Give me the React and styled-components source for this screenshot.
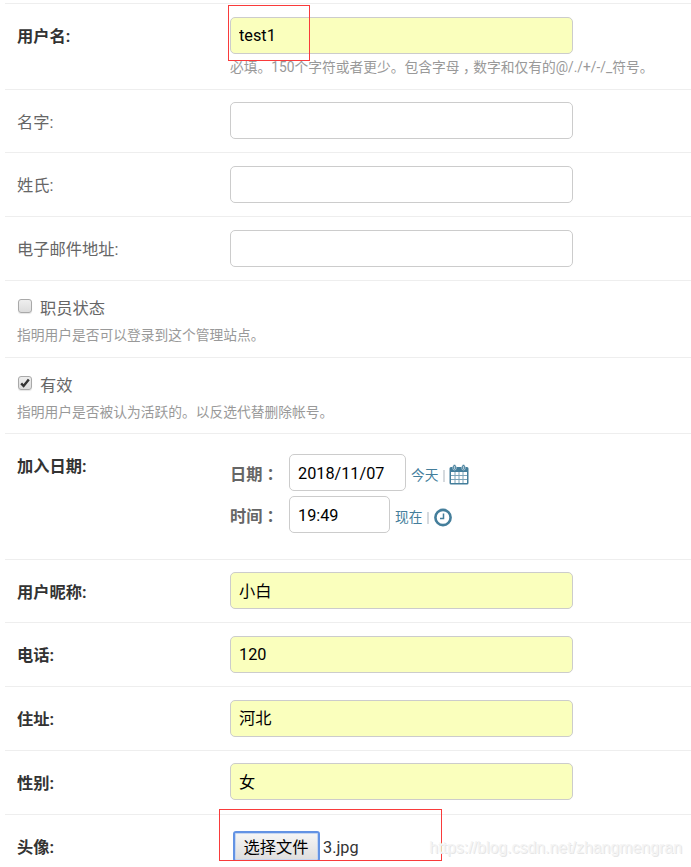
import React from 'react';
import styled, { createGlobalStyle } from 'styled-components';

const GlobalStyle = createGlobalStyle`
  * {
    box-sizing: border-box;
  }

  body {
    margin: 0;
    background: #fff;
    color: #333;
    font-family: Roboto, 'Noto Sans CJK SC', sans-serif;
    font-size: 16.25px;
    line-height: 20px;
  }
`;

const Page = styled.div`
  position: relative;
  height: 867px;
  overflow: hidden;
`;

const Fieldset = styled.form`
  height: 861px;
  margin-left: 5px;
  padding-top: 3px;
  overflow: hidden;
`;

const Row = styled.div`
  display: flex;
  align-items: flex-start;
  height: ${({ $height }) => $height || 64}px;
  padding: ${({ $top }) => $top || 13}px 0 0 12px;
  border-top: 1px solid #eee;
`;

const Label = styled.label`
  width: 213px;
  padding-top: ${({ $top }) => $top || 10}px;
  font-weight: ${({ $required }) => ($required ? 700 : 400)};
  color: ${({ $required }) => ($required ? '#333' : '#666')};
`;

const Input = styled.input`
  display: block;
  width: ${({ $width }) => $width || 343}px;
  height: 37px;
  margin: 0;
  padding: ${({ $shift }) => ($shift > 0 ? $shift : 0)}px 8px ${({ $shift }) => ($shift < 0 ? -$shift : 0)}px;

  font: inherit;
  color: #000;
  border: 1px solid #ccc;
  border-radius: 5px;
  background-color: ${({ $filled }) => ($filled ? '#faffbd' : '#fff')};
  outline: none;
`;

const Help = styled.p`
  margin: 0;
  padding-top: ${({ $top }) => $top || 3}px;
  font-size: 13.75px;
  line-height: 20px;
  color: #999;
  white-space: nowrap;
`;

/* Half-width glyph centred in a full-width cell */
const Punctuation = styled.span`
  padding: 0 .25em;
  font-feature-settings: 'halt';
`;

const CheckboxRow = styled(Row)`
  flex-direction: column;
`;

const CheckboxLabel = styled.label`
  display: flex;
  align-items: flex-start;
  gap: 8px;
  padding-left: 1px;
  color: #666;
`;

const Checkbox = styled.span`
  display: flex;
  width: 14px;
  height: 14px;
  margin-top: 1px;
  border: 1px solid #a9a9a9;
  border-radius: 3px;
  background: linear-gradient(#eee, #dcdcdc);
  box-shadow: 0 1px 1px rgba(0, 0, 0, .1);
`;

const CheckboxText = styled.span`
  padding-top: 1px;
`;

const DateTime = styled.div`
  display: grid;
  gap: 5px;
`;

const DateLine = styled.div`
  display: flex;
  align-items: center;
  height: 37px;
`;

const DateLabel = styled.label`
  width: 59px;
  padding-top: 5px;
  font-weight: 700;
  color: #666;
`;

const Shortcuts = styled.span`
  display: flex;
  align-items: center;
  margin-left: 5px;
  padding-top: 4px;
  font-size: 13.75px;
  color: #447e9b;
`;

const Separator = styled.span`
  width: 2px;
  height: 12px;
  margin: 2px 4px 0;
  background: #d6dade;
`;

const FilePicker = styled.div`
  display: flex;
  margin-left: 3px;
  padding-top: 3px;
`;

const FileButton = styled.button`
  width: 87px;
  height: 31px;
  padding: 2px 1px 0 0;

  font: inherit;
  color: #000;
  border: 2px solid #6393e4;
  border-radius: 3px;
  background: linear-gradient(#f6f6f6, #dedede);
  box-shadow: inset 0 0 0 1px #c5d6f0;
`;

const FileName = styled.span`
  padding: 7px 0 0 3px;
`;

const Highlight = styled.div`
  position: absolute;
  top: ${({ $top }) => $top}px;
  left: ${({ $left }) => $left}px;
  width: ${({ $width }) => $width}px;
  height: ${({ $height }) => $height}px;
  border: 1px solid #f93b3b;
  pointer-events: none;
`;

const Watermark = styled.div`
  position: absolute;
  right: 9px;
  bottom: 9px;
  font-family: 'Liberation Sans', Arial, sans-serif;
  font-size: 15.9px;
  color: #f4f4f4;
  text-shadow: 1px 1px 0 #e6e6e6;
`;

const CheckIcon = () => (
  <svg width="12" height="12" viewBox="0 0 12 12">
    <path d="M2.2 6.4l2.4 2.6L9.8 2.4" fill="none" stroke="#333" strokeWidth="2.4" />
  </svg>
);

const CalendarIcon = () => (
  <svg width="20" height="21" viewBox="0 0 20 21">
    <path d="M.5 4.500a1.500 1.500 0 0 1 1.500-1.500h16a1.500 1.500 0 0 1 1.500 1.500v14.500a1.500 1.500 0 0 1-1.500 1.500H2A1.500 1.500 0 0 1 .5 19z" fill="#447e9b" />
    <path d="M2 8h16v11H2z" fill="#fff" />
    <path d="M6 8v11M10 8v11M14 8v11M2 11.500h16M2 15.500h16" stroke="#7ba3b8" />
    <rect x="3.800" y=".6" width="3.400" height="5.400" rx="1.700" fill="#447e9b" stroke="#fff" strokeWidth=".5" />
    <rect x="12.800" y=".6" width="3.400" height="5.400" rx="1.700" fill="#447e9b" stroke="#fff" strokeWidth=".5" />
    <path d="M5.500 2v3M14.500 2v3" stroke="#bed2dc" strokeWidth=".9" />
  </svg>
);

const ClockIcon = () => (
  <svg width="20" height="20" viewBox="-1 -1.500 20 20" fill="none" stroke="#447e9b">
    <circle cx="9" cy="9" r="7.600" strokeWidth="2.600" />
    <path d="M9.500 5v5H6" strokeWidth="1.500" />
  </svg>
);

const TextRow = ({ label, value, required, height, top, shift, children }) => (
  <Row $height={height} $top={top}>
    <Label $required={required} $top={top === 12 ? 11 : 10}>{label}</Label>
    <div>
      <Input defaultValue={value} $filled={Boolean(value)} $shift={shift} />
      {children}
    </div>
  </Row>
);

export default () => (
  <Page>
    <GlobalStyle />
    <Fieldset>
      <TextRow label="用户名:" value="test1" required height={86}>
        <Help>
          必填。150个字符或者更少。包含字母<Punctuation>，</Punctuation>数字和仅有的@/./+/-/_符号。
        </Help>
      </TextRow>
      <TextRow label="名字:" height={63} top={12} />
      <TextRow label="姓氏:" />
      <TextRow label="电子邮件地址:" />
      <CheckboxRow $height={77} $top={17}>
        <CheckboxLabel>
          <Checkbox />
          <CheckboxText>职员状态</CheckboxText>
        </CheckboxLabel>
        <Help $top={6}>指明用户是否可以登录到这个管理站点。</Help>
      </CheckboxRow>
      <CheckboxRow $height={76} $top={17}>
        <CheckboxLabel>
          <Checkbox><CheckIcon /></Checkbox>
          <CheckboxText>有效</CheckboxText>
        </CheckboxLabel>
        <Help $top={6}>指明用户是否被认为活跃的。以反选代替删除帐号。</Help>
      </CheckboxRow>
      <Row $height={126} $top={20}>
        <Label as="div" $required $top={3}>加入日期:</Label>
        <DateTime>
          <DateLine>
            <DateLabel>日期<Punctuation>：</Punctuation></DateLabel>
            <Input defaultValue="2018/11/07" $width={117} $shift={2} />
            <Shortcuts>今天<Separator /><CalendarIcon /></Shortcuts>
          </DateLine>
          <DateLine>
            <DateLabel>时间<Punctuation>：</Punctuation></DateLabel>
            <Input defaultValue="19:49" $width={101} $shift={2} />
            <Shortcuts>现在<Separator /><ClockIcon /></Shortcuts>
          </DateLine>
        </DateTime>
      </Row>
      <TextRow label="用户昵称:" value="小白" required height={63} top={12} shift={-2} />
      <TextRow label="电话:" value="120" required />
      <TextRow label="住址:" value="河北" required shift={-3} />
      <TextRow label="性别:" value="女" required top={12} shift={-1} />
      <Row>
        <Label $required>头像:</Label>
        <FilePicker>
          <FileButton type="button">选择文件</FileButton>
          <FileName>3.jpg</FileName>
        </FilePicker>
      </Row>
    </Fieldset>
    <Highlight $left={228} $top={5} $width={82} $height={56} />
    <Highlight $left={219} $top={809} $width={223} $height={52} />
    <Watermark>https://blog.csdn.net/zhangmengran</Watermark>
  </Page>
);
